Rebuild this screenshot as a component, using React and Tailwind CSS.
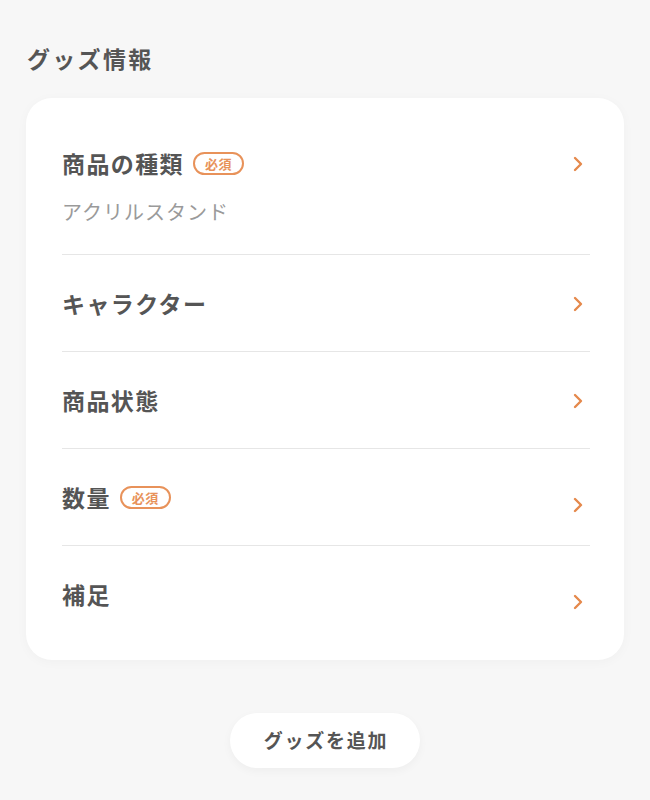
import React from 'react';

const font = { fontFamily: '"Noto Sans CJK JP", "Noto Sans", sans-serif' };

const Required = () => (
    <span className="ml-[9px] inline-flex h-[23px] w-[51px] items-center justify-center rounded-full border-2 border-[#e8925a] text-[13px] font-bold leading-none tracking-[0.04em] text-[#e8925a]">
        必須
    </span>
);

const Chevron = ({ className = '' }) => (
    <svg width="12" height="18" viewBox="0 0 12 18" className={className} fill="none">
        <path d="M3 3l6 6-6 6" stroke="#e5894c" strokeWidth="2.4" strokeLinecap="round" strokeLinejoin="round" />
    </svg>
);

const Row = ({ label, required, sub, chevronLow, last }) => (
    <div className={`flex items-start justify-between ${last ? '' : 'border-b border-[#e6e6e6]'} ${sub ? 'pt-[34px] pb-[28px]' : 'pt-[34px] pb-[34px]'}`}>
        <div className="flex flex-col">
            <div className="flex h-[28px] items-center">
                <span className="text-[23px] font-bold leading-[28px] tracking-[0.06em] text-[#555555]">{label}</span>
                {required && <Required />}
            </div>
            {sub && (
                <span className="mt-[21px] text-[20px] leading-[28px] tracking-[0.05em] text-[#9a9a9a]">{sub}</span>
            )}
        </div>
        <Chevron className={`mr-[6px] ${chevronLow ? 'translate-y-[13px]' : 'translate-y-[6px]'}`} />
    </div>
);

export default function App() {
    return (
        <div className="min-h-[800px] bg-[#f7f7f7] px-[26px] pt-[42px]" style={font}>
            <h2 className="pl-[1px] text-[23px] font-bold leading-[32px] tracking-[0.1em] text-[#555555]">グッズ情報</h2>

            <div className="mt-[24px] rounded-[26px] bg-white pl-[36px] pr-[34px] pt-[17px] pb-[18px] shadow-[0_2px_12px_rgba(0,0,0,0.03)]">
                <Row label="商品の種類" required sub="アクリルスタンド" />
                <Row label="キャラクター" />
                <Row label="商品状態" />
                <Row label="数量" required chevronLow />
                <Row label="補足" chevronLow last />
            </div>

            <div className="mt-[53px] flex justify-center">
                <button className="h-[55px] w-[190px] rounded-full bg-white pl-[2px] text-[19px] font-bold tracking-[0.09em] text-[#555555] shadow-[0_3px_10px_rgba(0,0,0,0.04)]">
                    グッズを追加
                </button>
            </div>
        </div>
    );
}
